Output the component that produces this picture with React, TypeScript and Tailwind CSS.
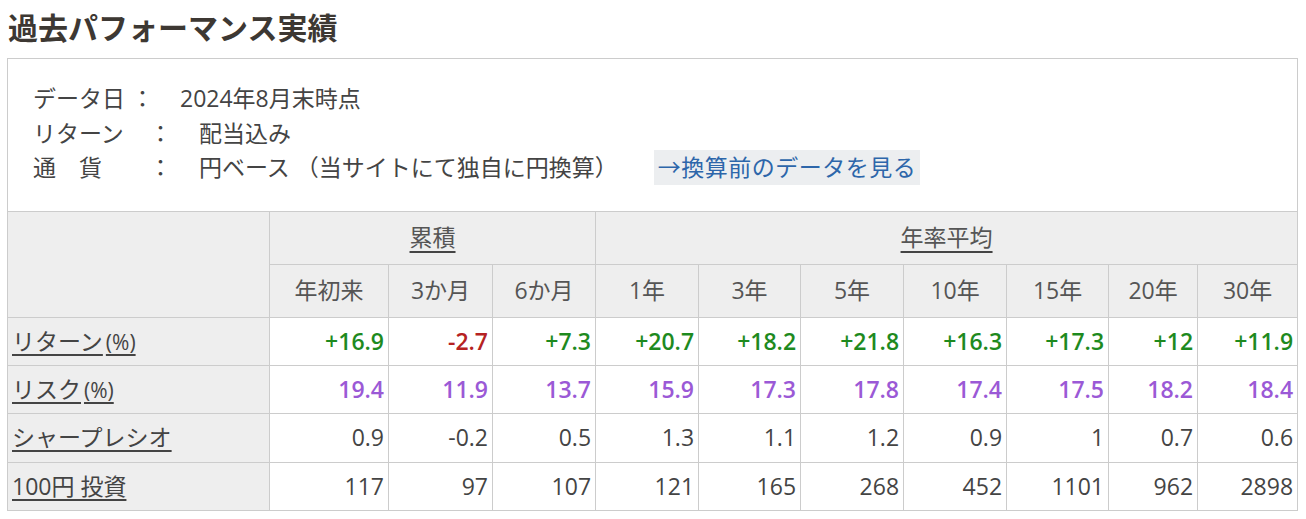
import React from "react";

const cols = [262, 119, 104, 103, 103, 102, 103, 103, 102, 89, 100];

type Row = { label: string; unit?: string; color: string; values: string[] };

const rows: Row[] = [
  {
    label: "リターン",
    unit: "(%)",
    color: "font-semibold",
    values: ["+16.9", "-2.7", "+7.3", "+20.7", "+18.2", "+21.8", "+16.3", "+17.3", "+12", "+11.9"],
  },
  {
    label: "リスク",
    unit: "(%)",
    color: "font-semibold text-[#9b59d6]",
    values: ["19.4", "11.9", "13.7", "15.9", "17.3", "17.8", "17.4", "17.5", "18.2", "18.4"],
  },
  {
    label: "シャープレシオ",
    color: "text-[#444]",
    values: ["0.9", "-0.2", "0.5", "1.3", "1.1", "1.2", "0.9", "1", "0.7", "0.6"],
  },
  {
    label: "100円 投資",
    color: "text-[#444]",
    values: ["117", "97", "107", "121", "165", "268", "452", "1101", "962", "2898"],
  },
];

const periods = ["年初来", "3か月", "6か月", "1年", "3年", "5年", "10年", "15年", "20年", "30年"];

const returnColor = (v: string) => (v.startsWith("-") ? "text-[#b52222]" : "text-[#1e8a1e]");

export default function App() {
  return (
    <div
      className="min-h-[519px] bg-white px-[7px] pt-[7px] text-[#444]"
      style={{ fontFamily: '"Open Sans", "Noto Sans CJK JP", sans-serif' }}
    >
      <h2 className="text-[30px] font-bold leading-[42px] text-[#3d3833] pl-px">過去パフォーマンス実績</h2>

      <div className="mt-[9px] w-[1291px] border-x border-t border-[#ccc] pl-[25px] pt-[22px] pb-[26px] text-[23px] leading-[34.5px]">
        <div className="flex">
          <span>データ日 ：</span>
          <span className="ml-[26px]">2024年8月末時点</span>
        </div>
        <div className="flex">
          <span className="w-[116px]">リターン</span>
          <span>：</span>
          <span className="ml-[27px]">配当込み</span>
        </div>
        <div className="flex items-center">
          <span className="w-[116px]">通　貨</span>
          <span>：</span>
          <span className="ml-[27px]">円ベース （当サイトにて独自に円換算）</span>
          <a href="#" className="ml-[36px] bg-[#eceef0] px-[4px] tracking-[0.5px] text-[#2d66aa]">
            →換算前のデータを見る
          </a>
        </div>
      </div>

      <table className="w-[1291px] table-fixed border-collapse text-[23px]">
        <colgroup>
          {cols.map((w, i) => (
            <col key={i} style={{ width: w }} />
          ))}
        </colgroup>
        <thead>
          <tr className="h-[53px] bg-[#eee] text-[#555]">
            <th rowSpan={2} className="border border-[#ccc]" />
            <th colSpan={3} className="border border-[#ccc] font-normal">
              <span className="underline underline-offset-[5px] decoration-[#444]">累積</span>
            </th>
            <th colSpan={7} className="border border-[#ccc] font-normal">
              <span className="underline underline-offset-[5px] decoration-[#444]">年率平均</span>
            </th>
          </tr>
          <tr className="h-[53px] bg-[#eee] text-[#555]">
            {periods.map((p) => (
              <th key={p} className="border border-[#ccc] font-normal">
                {p}
              </th>
            ))}
          </tr>
        </thead>
        <tbody>
          {rows.map((r, ri) => (
            <tr key={r.label} className={ri === 2 ? "h-[49px]" : "h-[48px]"}>
              <td className="border border-[#ccc] bg-[#eee] pl-[4px]">
                <a href="#" className="text-[#444] underline underline-offset-[4px] decoration-[#444]">
                  {r.label}
                  {r.unit && <span className="ml-[3px] text-[21px]">{r.unit}</span>}
                </a>
              </td>
              {r.values.map((v, i) => (
                <td
                  key={i}
                  className={`border border-[#ccc] pr-[4px] text-right ${
                    ri === 0 ? returnColor(v) : ""
                  } ${r.color}`}
                >
                  {v}
                </td>
              ))}
            </tr>
          ))}
        </tbody>
      </table>
    </div>
  );
}
